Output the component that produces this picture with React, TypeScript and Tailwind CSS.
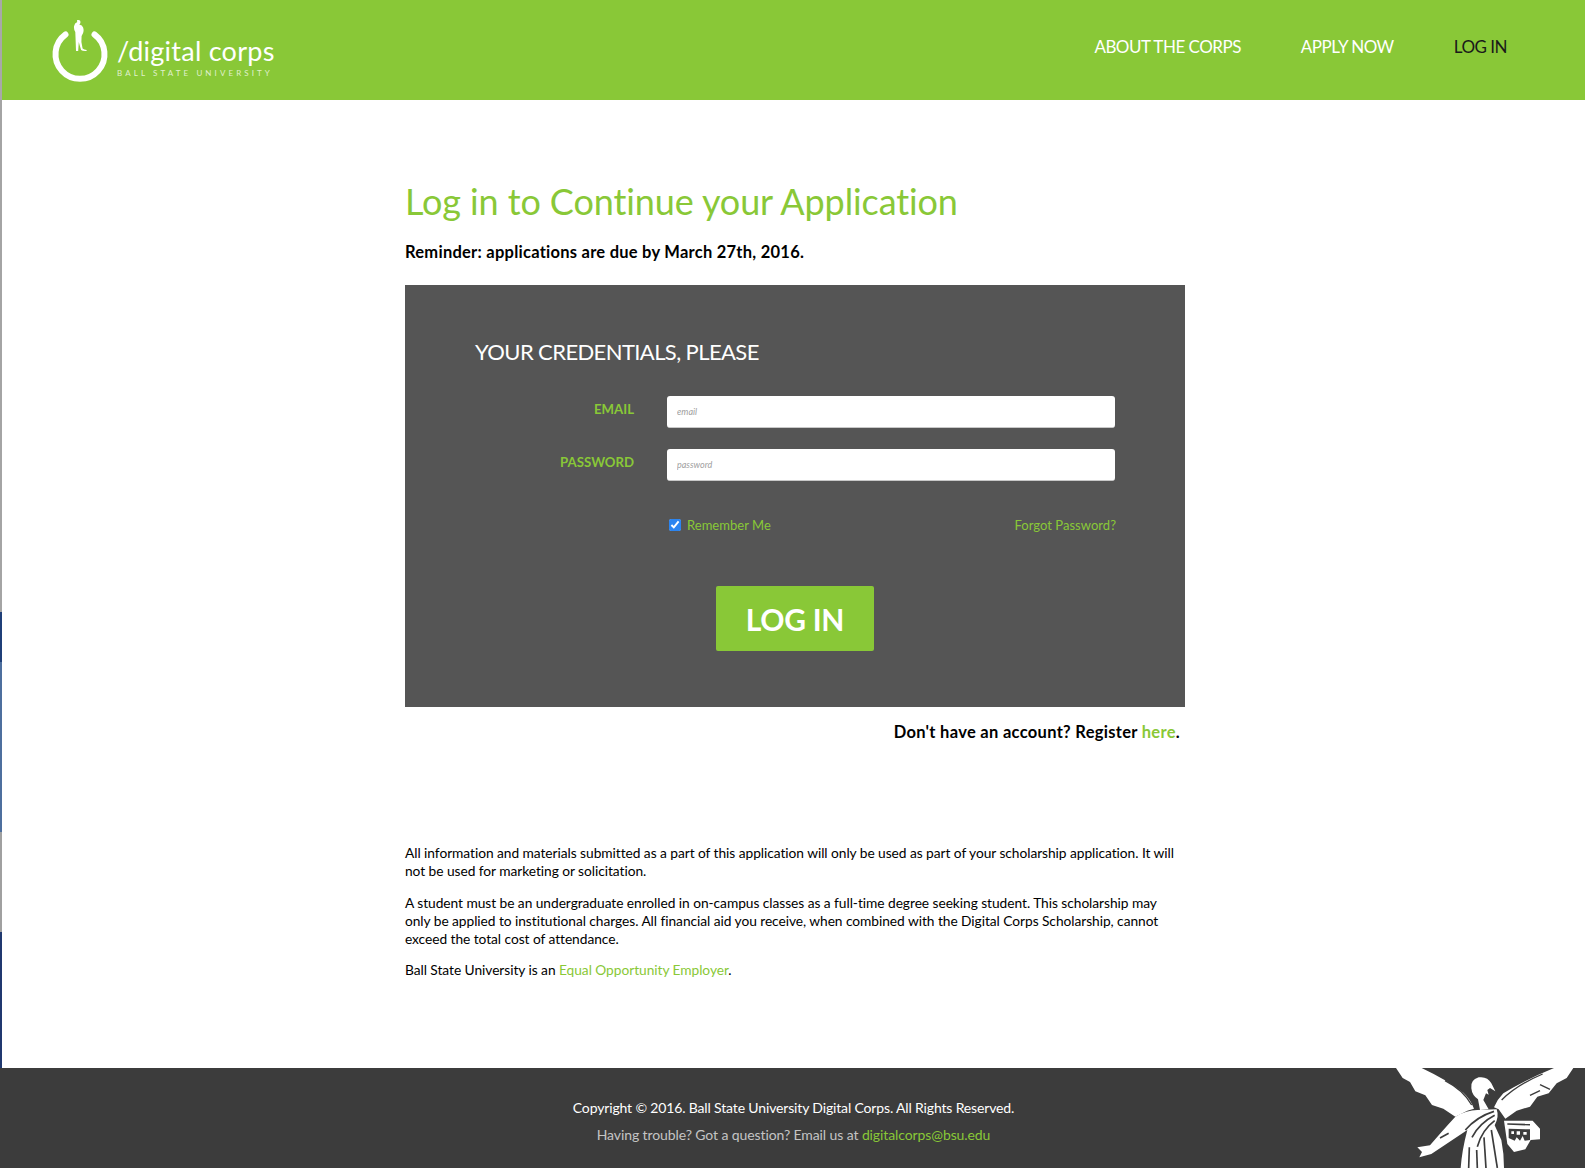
const font = "font-['Lato','Liberation_Sans',sans-serif]";

function Logo() {
  return (
    <a href="#" className="flex items-start">
      <svg width="62" height="62" viewBox="0 0 62 62" className="mt-[20px] shrink-0">
        <path d="M15.5 14.5 A 24.5 24.5 0 1 0 44.5 14.5" fill="none" stroke="#fff" strokeWidth="6" strokeLinecap="round" />
        <path
          d="M28.5 0 q2 0 2 2 q0 1.8 -1.2 2.4 q3 .6 3.8 3 q1 3 0 5.5 l-1.5 3 l-.2 6 l1.2 6.5 q1.5 1.2 4 1.6 l0 1 q-4 .3 -5.5 -1 l-1.5 -5 l-.8 -3 l-.6 9 l-2.2 0 l-.5 -14 l-.2 -5 q-1.8 -3 -1.2 -6 q.5 -3 3.2 -4 q-1 -2 1.5 -3.5 z"
          fill="#fff"
        />
      </svg>
      <div className="ml-[5px] mt-[34px] flex flex-col">
        <span className="text-[27px] leading-[34px] tracking-[0.25px] text-white">/digital corps</span>
        <span className="mt-[-1px] text-[8px] leading-[12px] tracking-[3.1px] text-white/75">BALL STATE UNIVERSITY</span>
      </div>
    </a>
  );
}

// traced by eye from the seal in the footer
function Eagle() {
  return (
    <svg width="225" height="100" viewBox="0 54 675 300" className="absolute bottom-0 right-0" fill="#fff">
      <path d="M108 54 L185 54 Q265 92 310 128 Q332 148 342 176 L322 182 L286 200 L250 176 L216 165 L196 136 L166 124 L150 96 L128 84 Z" />
      <path d="M640 54 L582 54 Q490 92 430 130 Q412 148 402 172 L416 178 L436 206 L470 182 L510 170 L532 140 L566 130 L590 100 L620 84 Z" />
      <path d="M334 115 Q330 90 356 82 Q382 78 394 100 L406 124 L390 114 L382 120 L386 134 L378 130 L370 150 L386 178 L360 180 L354 148 Q336 136 334 115 Z" />
      <path d="M286 200 Q320 180 352 180 L410 178 Q418 200 404 226 L424 270 Q432 310 432 354 L302 354 Q306 300 322 240 L268 276 L214 312 L178 322 L186 306 L172 292 L210 286 Q240 250 286 200 Z" />
      <path d="M432 212 L518 212 L540 236 L540 268 L512 270 L496 298 L462 306 L442 282 L436 240 Z" />
      <g fill="none" stroke="#3c3c3c" strokeWidth="5">
        <path d="M402 184 Q350 200 316 240" />
        <path d="M404 196 Q358 220 336 262" />
        <path d="M404 212 Q366 240 352 290" />
        <path d="M328 292 L326 354" />
        <path d="M350 300 L352 354" />
        <path d="M372 262 L378 354" />
        <path d="M394 240 L412 354" />
        <path d="M240 264 L266 250" />
        <path d="M548 72 Q470 105 425 150" strokeWidth="4" />
        <path d="M255 92 Q310 120 335 165" strokeWidth="4" />
        <path d="M540 104 L570 118" strokeWidth="4" />
        <path d="M510 136 L540 122" strokeWidth="4" />
      </g>
      <path d="M446 236 L510 238 L510 270 L494 272 L488 258 L480 272 L470 262 L464 272 L446 264 Z" fill="#3c3c3c" />
      <path d="M442 222 L510 224" stroke="#3c3c3c" strokeWidth="5" fill="none" />
      <path d="M454 244 h8 v8 h-8 z M470 244 h10 v10 h-10 z M490 246 h10 v8 h-10 z" fill="#fff" />
    </svg>
  );
}

export default function App() {
  return (
    <div className={`flex min-h-[1168px] bg-white text-black ${font}`}>
      <div className="flex w-[2px] shrink-0 flex-col">
        <div className="h-[100px] bg-[#a8a8a8]" />
        <div className="h-[512px] bg-[#a4a4a4]" />
        <div className="h-[50px] bg-[#1f3f78]" />
        <div className="h-[170px] bg-[#4d6f9e]" />
        <div className="h-[100px] bg-[#a0a0a0]" />
        <div className="h-[136px] bg-[#20386f]" />
        <div className="flex-1 bg-[#3c3c3c]" />
      </div>
      <div className="flex min-w-0 flex-1 flex-col">
        <header className="flex h-[100px] justify-between bg-[#89c837] pl-[48px] pr-[78px]">
          <Logo />
          <nav className="flex h-[94px] items-center gap-[60px] text-[17px] tracking-[-0.5px]">
            <a href="#" className="text-white">ABOUT THE CORPS</a>
            <a href="#" className="text-white">APPLY NOW</a>
            <a href="#" className="text-[#1a1a1a]">LOG IN</a>
          </nav>
        </header>

        <main className="ml-[403px] flex w-[780px] flex-1 flex-col pt-[77px]">
          <h1 className="text-[36px] leading-[48px] tracking-[-0.1px] text-[#89c837]">Log in to Continue your Application</h1>
          <p className="mt-[15px] text-[16.5px] font-bold leading-[24px] tracking-[0.25px]">Reminder: applications are due by March 27th, 2016.</p>

          <form className="mt-[21px] flex h-[422px] flex-col bg-[#555555] px-[70px] pt-[52px] text-[#89c837]">
            <h2 className="text-[22px] leading-[30px] tracking-[-0.6px] text-white">YOUR CREDENTIALS, PLEASE</h2>
            <div className="mt-[29px] flex items-start">
              <label className="mt-[3px] w-[159px] text-right text-[13.2px] font-bold leading-[20px]">EMAIL</label>
              <input placeholder="email" className="ml-[33px] h-[32px] w-[448px] rounded-[3px] border-b border-[#c8c8c8] bg-white px-[10px] text-[9px] italic outline-none placeholder:text-[#a0a0a0]" />
            </div>
            <div className="mt-[21px] flex items-start">
              <label className="mt-[3px] w-[159px] text-right text-[13.2px] font-bold leading-[20px]">PASSWORD</label>
              <input placeholder="password" className="ml-[33px] h-[32px] w-[448px] rounded-[3px] border-b border-[#c8c8c8] bg-white px-[10px] text-[9px] italic outline-none placeholder:text-[#a0a0a0]" />
            </div>
            <div className="ml-[192px] mt-[34px] flex w-[449px] items-center justify-between text-[13px] leading-[20px] tracking-[0.03px]">
              <label className="flex items-center">
                <input type="checkbox" defaultChecked className="ml-[2px] mr-[6px] size-[12px] accent-[#2b84f0]" />
                Remember Me
              </label>
              <a href="#">Forgot Password?</a>
            </div>
            <button type="button" className="mx-auto mt-[51px] h-[65px] w-[158px] rounded-[2px] bg-[#89c837] pt-[1px] text-[30px] font-bold tracking-[-0.3px] text-white">LOG IN</button>
          </form>

          <p className="mt-[13px] pr-[5px] text-right text-[16.5px] font-bold leading-[24px] tracking-[0.3px]">
            Don't have an account? Register <a href="#" className="text-[#89c837]">here</a>.
          </p>

          <div className="mt-[100px] flex flex-col gap-[14px] text-[13.75px] leading-[18px] tracking-[-0.05px]">
            <p>All information and materials submitted as a part of this application will only be used as part of your scholarship application. It will not be used for marketing or solicitation.</p>
            <p>A student must be an undergraduate enrolled in on-campus classes as a full-time degree seeking student. This scholarship may only be applied to institutional charges. All financial aid you receive, when combined with the Digital Corps Scholarship, cannot exceed the total cost of attendance.</p>
            <p className="-mt-px">Ball State University is an <a href="#" className="text-[#89c837]">Equal Opportunity Employer</a>.</p>
          </div>
        </main>

        <footer className="relative flex h-[100px] flex-col items-center bg-[#3c3c3c] pt-[28px] text-[14px] leading-[24px] tracking-[-0.15px]">
          <p className="text-white">Copyright © 2016. Ball State University Digital Corps. All Rights Reserved.</p>
          <p className="mt-[3px] tracking-[-0.1px] text-[#c4c4c4]">Having trouble? Got a question? Email us at <a href="#" className="text-[#89c837]">digitalcorps@bsu.edu</a></p>
          <Eagle />
        </footer>
      </div>
    </div>
  );
}
